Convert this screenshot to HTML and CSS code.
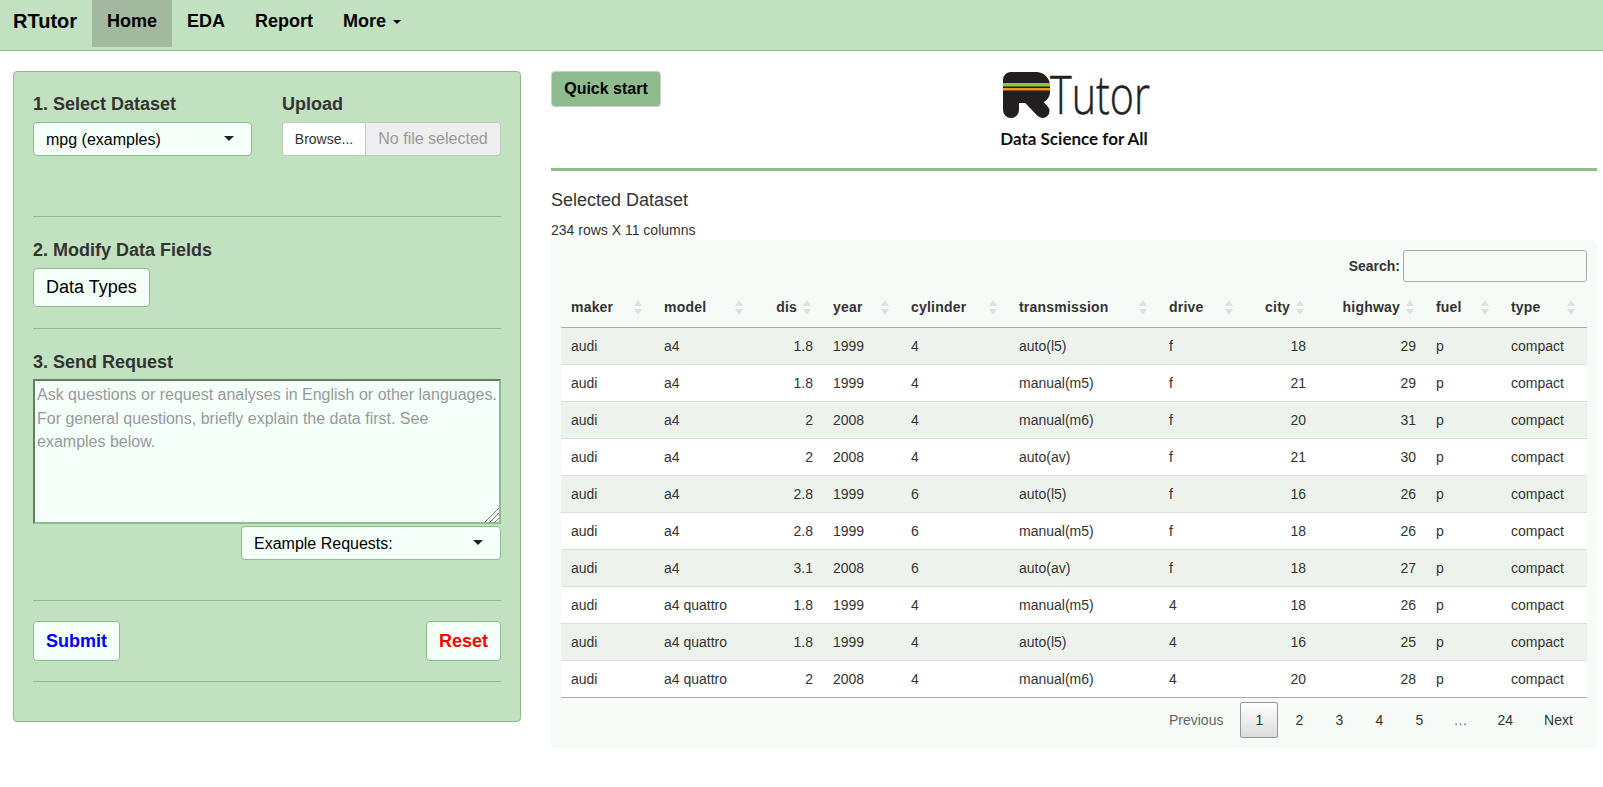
FILE: index.html
```html
<!DOCTYPE html>
<html>
  <head>
    <meta charset="UTF-8" />
    <title>RTutor</title>
    <link rel="stylesheet" href="styles.css">
  </head>
  <body>
    <nav class="navbar">
      <span class="brand">RTutor</span>
      <a class="nav-item active" href="#">Home</a>
      <a class="nav-item" href="#">EDA</a>
      <a class="nav-item" href="#">Report</a>
      <a class="nav-item" href="#">More <span class="nav-caret"></span></a>
    </nav>

    <main class="page">
      <!-- left side: the request form -->
      <aside class="panel">
        <div class="pick-row">
          <div>
            <label class="field-label">1. Select Dataset</label>
            <div class="select-box"><span class="select-text">mpg (examples)</span><span class="select-caret"></span></div>
          </div>
          <div>
            <label class="field-label">Upload</label>
            <div class="file-box">
              <span class="file-browse">Browse...</span>
              <span class="file-name">No file selected</span>
            </div>
          </div>
        </div>
        <hr class="rule" />

        <label class="field-label">2. Modify Data Fields</label>
        <button type="button" class="btn">Data Types</button>
        <hr class="rule rule-two" />

        <label class="field-label field-label-send">3. Send Request</label>
        <div class="request-wrap">
          <textarea class="request-box" placeholder="Ask questions or request analyses in English or other languages. For general questions, briefly explain the data first. See examples below."></textarea>
          <svg class="request-grip" width="14" height="14" viewBox="0 0 14 14">
            <path d="M14 0 L0 14 M14 5 L5 14 M14 10 L10 14" stroke="#777" stroke-width="1" fill="none" />
          </svg>
        </div>
        <div class="select-box select-examples"><span class="select-text">Example Requests:</span><span class="select-caret"></span></div>
        <hr class="rule rule-three" />

        <div class="actions">
          <button type="button" class="btn btn-submit">Submit</button>
          <button type="button" class="btn btn-reset">Reset</button>
        </div>
        <hr class="rule rule-four" />
      </aside>

      <!-- right side: logo and data table -->
      <section class="content">
        <div class="head">
          <div><button type="button" class="btn-quick">Quick start</button></div>
          <div class="logo">
            <svg class="logo-mark" width="185" height="75" viewBox="-4 -15 185 75">
              <path d="M10 1 H35 A14 14 0 0 1 49 15 V21 A11 11 0 0 1 38 32 H18 V39 A8 8 0 0 1 2 39 V9 A8 8 0 0 1 10 1 Z" fill="#231f20" />
              <path d="M28 26 L41.500 40" stroke="#231f20" stroke-width="14" stroke-linecap="round" />
              <rect x="2" y="12" width="47" height="3.500" fill="#8cc63f" />
              <rect x="2" y="17" width="47" height="2.500" fill="#f7941e" />
              <text class="logo-word" x="49" y="43" textLength="100" lengthAdjust="spacingAndGlyphs">Tutor</text>
            </svg>
            <div class="logo-tag">Data Science for All</div>
          </div>
          <div></div>
        </div>
        <hr class="head-rule" />

        <h4 class="data-title">Selected Dataset</h4>
        <div class="data-size">234 rows X 11 columns</div>

        <div class="table-wrap">
          <div class="search-row">
            <label>Search:</label>
            <input type="text" class="search-input" />
          </div>
          <table class="data-table">
            <colgroup>
              <col class="w-maker" /><col class="w-model" /><col class="w-dis" /><col class="w-year" />
              <col class="w-cylinder" /><col class="w-transmission" /><col class="w-drive" /><col class="w-city" />
              <col class="w-highway" /><col class="w-fuel" /><col class="w-type" />
            </colgroup>
            <thead>
              <tr>
                <th>maker</th><th>model</th><th class="num">dis</th><th>year</th><th>cylinder</th>
                <th>transmission</th><th>drive</th><th class="num">city</th><th class="num">highway</th><th>fuel</th><th>type</th>
              </tr>
            </thead>
            <tbody>
              <tr><td>audi</td><td>a4</td><td class="num">1.8</td><td>1999</td><td>4</td><td>auto(l5)</td><td>f</td><td class="num">18</td><td class="num">29</td><td>p</td><td>compact</td></tr>
              <tr><td>audi</td><td>a4</td><td class="num">1.8</td><td>1999</td><td>4</td><td>manual(m5)</td><td>f</td><td class="num">21</td><td class="num">29</td><td>p</td><td>compact</td></tr>
              <tr><td>audi</td><td>a4</td><td class="num">2</td><td>2008</td><td>4</td><td>manual(m6)</td><td>f</td><td class="num">20</td><td class="num">31</td><td>p</td><td>compact</td></tr>
              <tr><td>audi</td><td>a4</td><td class="num">2</td><td>2008</td><td>4</td><td>auto(av)</td><td>f</td><td class="num">21</td><td class="num">30</td><td>p</td><td>compact</td></tr>
              <tr><td>audi</td><td>a4</td><td class="num">2.8</td><td>1999</td><td>6</td><td>auto(l5)</td><td>f</td><td class="num">16</td><td class="num">26</td><td>p</td><td>compact</td></tr>
              <tr><td>audi</td><td>a4</td><td class="num">2.8</td><td>1999</td><td>6</td><td>manual(m5)</td><td>f</td><td class="num">18</td><td class="num">26</td><td>p</td><td>compact</td></tr>
              <tr><td>audi</td><td>a4</td><td class="num">3.1</td><td>2008</td><td>6</td><td>auto(av)</td><td>f</td><td class="num">18</td><td class="num">27</td><td>p</td><td>compact</td></tr>
              <tr><td>audi</td><td>a4 quattro</td><td class="num">1.8</td><td>1999</td><td>4</td><td>manual(m5)</td><td>4</td><td class="num">18</td><td class="num">26</td><td>p</td><td>compact</td></tr>
              <tr><td>audi</td><td>a4 quattro</td><td class="num">1.8</td><td>1999</td><td>4</td><td>auto(l5)</td><td>4</td><td class="num">16</td><td class="num">25</td><td>p</td><td>compact</td></tr>
              <tr><td>audi</td><td>a4 quattro</td><td class="num">2</td><td>2008</td><td>4</td><td>manual(m6)</td><td>4</td><td class="num">20</td><td class="num">28</td><td>p</td><td>compact</td></tr>
            </tbody>
          </table>
          <div class="pager">
            <a class="page-btn page-off" href="#">Previous</a>
            <a class="page-btn page-current" href="#">1</a>
            <a class="page-btn" href="#">2</a>
            <a class="page-btn" href="#">3</a>
            <a class="page-btn" href="#">4</a>
            <a class="page-btn" href="#">5</a>
            <span class="page-btn page-off page-dots">…</span>
            <a class="page-btn" href="#">24</a>
            <a class="page-btn page-next" href="#">Next</a>
          </div>
        </div>
      </section>
    </main>
  </body>
</html>
```

FILE: styles.css
```css
/* General */
* {
  box-sizing: border-box;
}

body {
  margin: 0;
  font-family: "Liberation Sans", Arial, sans-serif;
  font-size: 14px;
  line-height: 20px;
  color: #333;
  background-color: #fff;
}

/* Navbar */
.navbar {
  display: flex;
  align-items: flex-start;
  height: 51px;
  background-color: #c1e1c1;
  border-bottom: 1px solid #8fbc8f;
}

.brand {
  padding: 11px 15px 0 13px;
  font-size: 20px;
  font-weight: bold;
  color: #000;
}

.nav-item {
  padding: 11px 15px 16px;
  font-size: 18px;
  font-weight: bold;
  color: #000;
  text-decoration: none;
}

.nav-item.active {
  background-color: #a2b9a0;
}

.nav-caret {
  display: inline-block;
  margin-left: 2px;
  vertical-align: middle;
  border-top: 4px solid #000;
  border-left: 4px solid transparent;
  border-right: 4px solid transparent;
}

/* Page columns */
.page {
  display: flex;
  align-items: flex-start;
  gap: 30px;
  padding: 20px 6px 0 13px;
}

.panel {
  flex: 0 0 508px;
  height: 651px;
  padding: 22px 19px 0;
  background-color: #c1e1c1;
  border: 1px solid #8fbc8f;
  border-radius: 4px;
}

.content {
  flex: 1;
  min-width: 0;
}

/* Form side */
.pick-row {
  display: grid;
  grid-template-columns: 219px 1fr;
  column-gap: 30px;
  height: 122px;
}

.field-label {
  display: block;
  margin-bottom: 8px;
  font-size: 18px;
  font-weight: bold;
}

.field-label-send {
  margin-bottom: 7px;
}

.select-box {
  display: flex;
  justify-content: space-between;
  align-items: center;
  height: 34px;
  padding: 0 17px 0 12px;
  font-size: 16px;
  color: #000;
  background-color: #f5fffa;
  border: 1px solid #8fbc8f;
  border-radius: 4px;
}

.select-text {
  padding-top: 2px;
}

.select-caret {
  margin-top: -2px;
  border-top: 5px solid #222;
  border-left: 5px solid transparent;
  border-right: 5px solid transparent;
}

.select-examples {
  width: 260px;
  margin: 2px 0 0 auto;
}

.file-box {
  display: flex;
  height: 34px;
  border: 1px solid #b9cdb9;
  border-radius: 4px;
  overflow: hidden;
}

.file-browse {
  flex: 0 0 83px;
  line-height: 32px;
  text-align: center;
  background-color: #fff;
  border-right: 1px solid #b9cdb9;
}

.file-name {
  flex: 1;
  line-height: 32px;
  font-size: 16px;
  text-align: center;
  color: #999;
  background-color: #eee;
}

.rule {
  height: 1px;
  margin: 0 0 23px;
  background-color: #8fbc8f;
  border: 0;
}

.rule-two {
  margin: 21px 0 23px;
}

.rule-three {
  margin: 40px 0 20px;
}

.rule-four {
  margin: 20px 0 0;
}

.btn {
  display: block;
  height: 39px;
  padding: 0 12px;
  font-family: inherit;
  font-size: 18px;
  color: #000;
  background-color: #f5fffa;
  border: 1px solid #8fbc8f;
  border-radius: 4px;
}

.btn-submit,
.btn-reset {
  height: 40px;
  font-weight: bold;
}

.btn-submit {
  color: #00f;
}

.btn-reset {
  color: #f00;
}

.actions {
  display: flex;
  justify-content: space-between;
}

.request-wrap {
  position: relative;
}

.request-box {
  display: block;
  width: 100%;
  height: 145px;
  padding: 2px 0 0 2px;
  font-family: inherit;
  font-size: 16px;
  line-height: 23.500px;
  background-color: #f5fffa;
  border: 2px solid;
  border-color: #5f7f5f #8fbc8f #8fbc8f #5f7f5f;
  resize: none;
}

.request-box::placeholder {
  color: #999;
}

.request-grip {
  position: absolute;
  right: 2px;
  bottom: 2px;
}

/* Header of the right side */
.head {
  display: grid;
  grid-template-columns: 1fr auto 1fr;
  height: 97px;
}

.btn-quick {
  width: 110px;
  height: 36px;
  font-family: inherit;
  font-size: 16px;
  font-weight: bold;
  color: #000;
  background-color: #8fbc8f;
  border: 1px solid #ccc;
  border-radius: 4px;
}

/* the svg is bigger than the logo, the word needs its whole text box */
.logo {
  margin-right: -30px;
}

.logo-mark {
  display: block;
  margin: -15px 0 -10px;
}

.logo-word {
  font-family: "Open Sans", sans-serif;
  font-size: 53px;
  font-weight: 300;
  fill: #231f20;
  stroke: #231f20;
  stroke-width: 0.5px;
}

.logo-tag {
  margin: 8px 30px 0 0;
  font-family: Lato, sans-serif;
  font-size: 17px;
  font-weight: bold;
  text-align: center;
  color: #111;
}

.head-rule {
  height: 3px;
  margin: 0;
  background-color: #8fbc8f;
  border: 0;
}

.data-title {
  margin: 19px 0 0;
  font-size: 18px;
  font-weight: normal;
}

.data-size {
  margin-top: 11px;
  line-height: 19px;
}

/* Data table */
.table-wrap {
  height: 508px;
  padding: 10px;
  background-color: #f7fbf8;
  border-radius: 4px;
}

.search-row {
  display: flex;
  justify-content: flex-end;
  align-items: center;
  gap: 3px;
  font-weight: bold;
}

.search-input {
  width: 184px;
  height: 32px;
  background-color: transparent;
  border: 1px solid #aaa;
  border-radius: 3px;
}

.data-table {
  width: 100%;
  margin-top: 5px;
  table-layout: fixed;
  border-collapse: separate;
  border-spacing: 0;
}

.w-maker { width: 93px; }
.w-model { width: 101px; }
.w-dis { width: 68px; }
.w-year { width: 78px; }
.w-cylinder { width: 108px; }
.w-transmission { width: 150px; }
.w-drive { width: 86px; }
.w-city { width: 71px; }
.w-highway { width: 110px; }
.w-fuel { width: 75px; }
.w-type { width: 86px; }

.data-table th {
  position: relative;
  height: 41px;
  padding: 0 26px 0 10px;
  font-weight: bold;
  letter-spacing: 0.2px;
  text-align: left;
  border-bottom: 1px solid #aaa;
}

.data-table th::before,
.data-table th::after {
  content: "";
  position: absolute;
  right: 12px;
  border-left: 4px solid transparent;
  border-right: 4px solid transparent;
}

.data-table th::before {
  top: 13px;
  border-bottom: 6px solid #dde2df;
}

.data-table th::after {
  top: 22px;
  border-top: 6px solid #dde2df;
}

.data-table td {
  height: 37px;
  padding: 0 10px;
  background-color: #fff;
  border-bottom: 1px solid #ddd;
}

.data-table tbody tr:nth-child(odd) td {
  background-color: #edf3ec;
}

.data-table tbody tr:last-child td {
  border-bottom-color: #aaa;
}

.data-table .num {
  text-align: right;
}

/* Pagination */
.pager {
  display: flex;
  justify-content: flex-end;
  gap: 2px;
  margin-top: 4px;
}

.page-btn {
  min-width: 38px;
  padding: 7px 14px;
  color: #333;
  text-align: center;
  text-decoration: none;
  border: 1px solid transparent;
  border-radius: 2px;
}

.page-off {
  color: #666;
}

.page-dots {
  width: 40px;
  padding: 7px 0;
}

.page-next {
  width: 57px;
  padding: 7px 0;
}

.page-current {
  background: linear-gradient(to bottom, #fff 0%, #dcdcdc 100%);
  border-color: #979797;
}
```
